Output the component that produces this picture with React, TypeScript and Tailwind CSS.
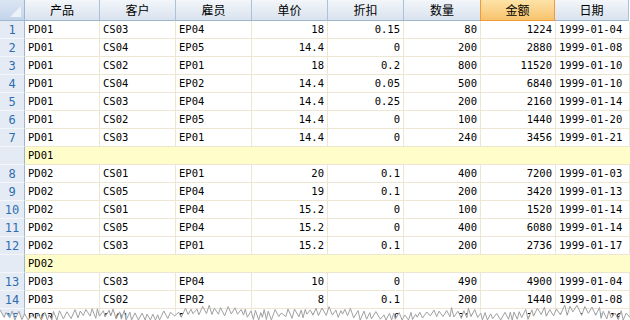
import React from "react";

type Row = string[];
const cols = [
  { name: "产品", w: 75, align: "left" },
  { name: "客户", w: 76, align: "left" },
  { name: "雇员", w: 76, align: "left" },
  { name: "单价", w: 76, align: "right" },
  { name: "折扣", w: 76, align: "right" },
  { name: "数量", w: 77, align: "right" },
  { name: "金额", w: 75, align: "right" },
  { name: "日期", w: 74, align: "left" },
];

type Item = { kind: "data"; n: number; cells: Row } | { kind: "group"; label: string };

const items: Item[] = [
  { kind: "data", n: 1, cells: ["PD01", "CS03", "EP04", "18", "0.15", "80", "1224", "1999-01-04"] },
  { kind: "data", n: 2, cells: ["PD01", "CS04", "EP05", "14.4", "0", "200", "2880", "1999-01-08"] },
  { kind: "data", n: 3, cells: ["PD01", "CS02", "EP01", "18", "0.2", "800", "11520", "1999-01-10"] },
  { kind: "data", n: 4, cells: ["PD01", "CS04", "EP02", "14.4", "0.05", "500", "6840", "1999-01-10"] },
  { kind: "data", n: 5, cells: ["PD01", "CS03", "EP04", "14.4", "0.25", "200", "2160", "1999-01-14"] },
  { kind: "data", n: 6, cells: ["PD01", "CS02", "EP05", "14.4", "0", "100", "1440", "1999-01-20"] },
  { kind: "data", n: 7, cells: ["PD01", "CS03", "EP01", "14.4", "0", "240", "3456", "1999-01-21"] },
  { kind: "group", label: "PD01" },
  { kind: "data", n: 8, cells: ["PD02", "CS01", "EP01", "20", "0.1", "400", "7200", "1999-01-03"] },
  { kind: "data", n: 9, cells: ["PD02", "CS05", "EP04", "19", "0.1", "200", "3420", "1999-01-13"] },
  { kind: "data", n: 10, cells: ["PD02", "CS01", "EP04", "15.2", "0", "100", "1520", "1999-01-14"] },
  { kind: "data", n: 11, cells: ["PD02", "CS05", "EP04", "15.2", "0", "400", "6080", "1999-01-14"] },
  { kind: "data", n: 12, cells: ["PD02", "CS03", "EP01", "15.2", "0.1", "200", "2736", "1999-01-17"] },
  { kind: "group", label: "PD02" },
  { kind: "data", n: 13, cells: ["PD03", "CS03", "EP04", "10", "0", "490", "4900", "1999-01-04"] },
  { kind: "data", n: 14, cells: ["PD03", "CS02", "EP02", "8", "0.1", "200", "1440", "1999-01-08"] },
  { kind: "data", n: 15, cells: ["PD03", "CS01", "EP04", "10", "0", "300", "3000", "1999-01-16"] },
];

const mono = { fontFamily: '"DejaVu Sans Mono", "Liberation Mono", monospace' };

function wavePath(): string {
  let seed = 11;
  const rnd = () => {
    seed = (seed * 9301 + 49297) % 233280;
    return seed / 233280;
  };
  const pts: string[] = [];
  let x = 0;
  let up = true;
  while (x <= 634) {
    const base = 314 + Math.sin(x / 19) * 2.5 + Math.sin(x / 53) * 1.5;
    const amp = 1.5 + rnd() * 4;
    const y = base + (up ? -amp : amp);
    up = !up;
    pts.push(`${x.toFixed(1)},${Math.min(320, Math.max(305, y)).toFixed(1)}`);
    x += 1.5 + rnd() * 3;
  }
  return pts.join(" ");
}

export default function App() {
  const wp = wavePath();
  return (
    <div className="relative w-[630px] h-[320px] overflow-hidden bg-white text-black">
      <div className="flex h-[21px]">
        <div className="relative w-[25px] h-[21px] shrink-0 bg-gradient-to-b from-[#dbe6f3] to-[#c3d4ea] border-r border-b border-[#9eb6cf]">
          <div className="absolute right-[3px] bottom-[3px] w-0 h-0 border-l-[11px] border-l-transparent border-b-[11px] border-b-[#edf2f9]" />
        </div>
        {cols.map((c, i) => {
          const sel = i === 6;
          return (
            <div
              key={c.name}
              style={{ width: c.w, fontFamily: '"Noto Sans CJK SC", sans-serif' }}
              className={
                sel
                  ? "shrink-0 h-[21px] flex items-center justify-center text-[12px] leading-none bg-gradient-to-b from-[#fde3a7] to-[#f7c36c] border-l border-r border-b border-[#f09a3c] -ml-px"
                  : "shrink-0 h-[21px] flex items-center justify-center text-[12px] leading-none bg-gradient-to-b from-[#f3f6fa] to-[#d9e2ee] border-r border-b border-r-[#aac1da] border-b-[#9eb6cf]"
              }
            >
              {c.name}
            </div>
          );
        })}
      </div>
      {items.map((it, idx) => (
        <div key={idx} className="flex h-[18px]">
          <div
            style={mono}
            className="w-[25px] shrink-0 h-[18px] flex items-center justify-center text-[12px] text-[#2f6db0] bg-[#e4ebf5] border-r border-[#9eb6cf] border-b border-b-[#f3f6fa]"
          >
            {it.kind === "data" ? it.n : ""}
          </div>
          {it.kind === "group" ? (
            <div style={mono} className="flex-1 h-[18px] flex items-center pl-[3px] text-[10.5px] bg-[#fffdc9] border-b border-[#ece5cf]">
              {it.label}
            </div>
          ) : (
            it.cells.map((v, ci) => (
              <div
                key={ci}
                style={{ ...mono, width: cols[ci].w }}
                className={
                  "shrink-0 h-[18px] flex items-center px-[3px] text-[10.5px] whitespace-nowrap border-r border-b border-[#ede6d1] " +
                  (cols[ci].align === "right" ? "justify-end" : "justify-start")
                }
              >
                {v}
              </div>
            ))
          )}
        </div>
      ))}
      <svg className="absolute left-0 top-0" width="630" height="320" viewBox="0 0 630 320">
        <polygon points={`${wp} 634,330 0,330`} fill="#ffffff" />
        <polyline points={wp} fill="none" stroke="#a0a0a0" strokeWidth="1" />
      </svg>
    </div>
  );
}
